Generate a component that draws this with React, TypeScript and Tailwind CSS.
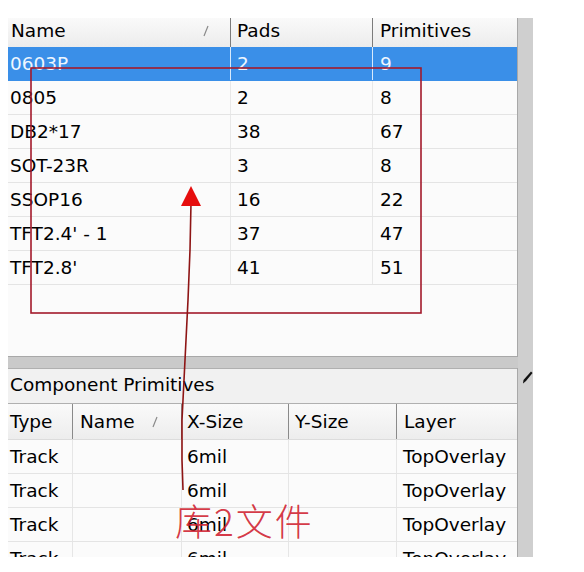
import React from "react";

const topRows: [string, string, string][] = [
  ["0603P", "2", "9"],
  ["0805", "2", "8"],
  ["DB2*17", "38", "67"],
  ["SOT-23R", "3", "8"],
  ["SSOP16", "16", "22"],
  ["TFT2.4' - 1", "37", "47"],
  ["TFT2.8'", "41", "51"],
];

const SortMark = () => (
  <svg width="8" height="12" viewBox="0 0 8 12" className="shrink-0">
    <line x1="6" y1="1" x2="2" y2="11" stroke="#8a8a8a" strokeWidth="1.2" />
  </svg>
);

export default function App() {
  const font = { fontFamily: '"DejaVu Sans", "Liberation Sans", sans-serif' };
  return (
    <div
      className="relative w-[584px] h-[572px] bg-white overflow-hidden text-[18.5px] text-black"
      style={font}
    >
      <div className="pt-[18px] pl-[8px] flex">
        <div className="w-[510px] flex flex-col">
          {/* top panel */}
          <div className="h-[339px] bg-[#fbfbfb] border-r border-b border-[#a8a8a8] flex flex-col">
            <div className="h-[29px] flex bg-gradient-to-b from-[#fafafa] to-[#ececec]">
              <div className="w-[223px] border-r border-[#7c7c7c] flex items-center pl-[3px] pr-[20px] pb-[3px] justify-between">
                <span>Name</span>
                <SortMark />
              </div>
              <div className="w-[142px] border-r border-[#7c7c7c] flex items-center pl-[6px] pb-[3px]">Pads</div>
              <div className="flex-1 flex items-center pl-[7px] pb-[3px]">Primitives</div>
            </div>
            {topRows.map((r, i) => {
              const sel = i === 0;
              return (
                <div
                  key={i}
                  className={
                    sel
                      ? "h-[34px] flex bg-[#3a8fe8] text-[#eef6ff] border-b border-[#3a8fe8]"
                      : "h-[34px] flex border-b border-[#e4e4e4]"
                  }
                >
                  <div className={sel ? "w-[223px] border-r border-[#d8eafc] flex items-center pl-[2px]" : "w-[223px] border-r border-[#e8e8e8] flex items-center pl-[2px]"}>
                    {r[0]}
                  </div>
                  <div className={sel ? "w-[142px] border-r border-[#d8eafc] flex items-center pl-[6px]" : "w-[142px] border-r border-[#e8e8e8] flex items-center pl-[6px]"}>
                    {r[1]}
                  </div>
                  <div className="flex-1 flex items-center pl-[7px]">{r[2]}</div>
                </div>
              );
            })}
          </div>
          {/* splitter */}
          <div className="h-[11px] bg-[#cacaca]" />
          {/* bottom panel */}
          <div className="h-[189px] overflow-hidden bg-[#fbfbfb] border-r border-[#a8a8a8] flex flex-col">
            <div className="h-[36px] shrink-0 bg-[#f1f1f1] border-t border-[#b0b0b0] border-b border-[#a0a0a0] flex items-center pl-[2px] pb-[2px]">
              Component Primitives
            </div>
            <div className="h-[36px] shrink-0 flex bg-gradient-to-b from-[#fafafa] to-[#ededed] border-b border-[#dcdcdc]">
              <div className="w-[65px] border-r border-[#8a8a8a] flex items-center pl-[2px]">Type</div>
              <div className="w-[109px] border-r border-[#8a8a8a] flex items-center pl-[7px] pr-[22px] justify-between">
                <span>Name</span>
                <SortMark />
              </div>
              <div className="w-[107px] border-r border-[#8a8a8a] flex items-center pl-[5px]">X-Size</div>
              <div className="w-[108px] border-r border-[#8a8a8a] flex items-center pl-[6px]">Y-Size</div>
              <div className="flex-1 flex items-center pl-[7px]">Layer</div>
            </div>
            {[0, 1, 2, 3].map((i) => (
              <div key={i} className="h-[34px] shrink-0 flex border-b border-[#e4e4e4]">
                <div className="w-[65px] border-r border-[#e6e6e6] flex items-center pl-[2px]">Track</div>
                <div className="w-[109px] border-r border-[#e6e6e6]" />
                <div className="w-[107px] border-r border-[#e6e6e6] flex items-center pl-[5px]">6mil</div>
                <div className="w-[108px] border-r border-[#e6e6e6]" />
                <div className="flex-1 flex items-center pl-[6px]">TopOverlay</div>
              </div>
            ))}
          </div>
        </div>
        {/* right strip */}
        <div className="w-[15px] h-[539px] bg-[#cfcfcf] pt-[353px] pl-[4px]">
          <svg width="11" height="13" viewBox="0 0 11 13">
            <path d="M9 0.5 L10.5 2 L4 10 L1 12.5 L1.5 9 Z" fill="#111" />
          </svg>
        </div>
      </div>

      {/* red annotation overlay */}
      <svg className="absolute left-0 top-0 pointer-events-none" width="584" height="572" viewBox="0 0 584 572">
        <rect x="31" y="68" width="390" height="245" fill="none" stroke="#a3192b" strokeWidth="1.6" />
        <polyline
          points="191,203 190,250 188,300 186,340 184,380 182,420 182,460 183,490"
          fill="none"
          stroke="#8e1515"
          strokeWidth="1.6"
        />
        <polygon points="191,186 181,206 201,206" fill="#e60d0d" />
      </svg>
      <div
        className="absolute left-[175px] top-[502px] text-[37px] leading-none text-[#d01f30]/90 tracking-[2px] font-light"
        style={{ fontFamily: '"Noto Sans CJK SC", "DejaVu Sans", sans-serif' }}
      >
        库2文件
      </div>
    </div>
  );
}
